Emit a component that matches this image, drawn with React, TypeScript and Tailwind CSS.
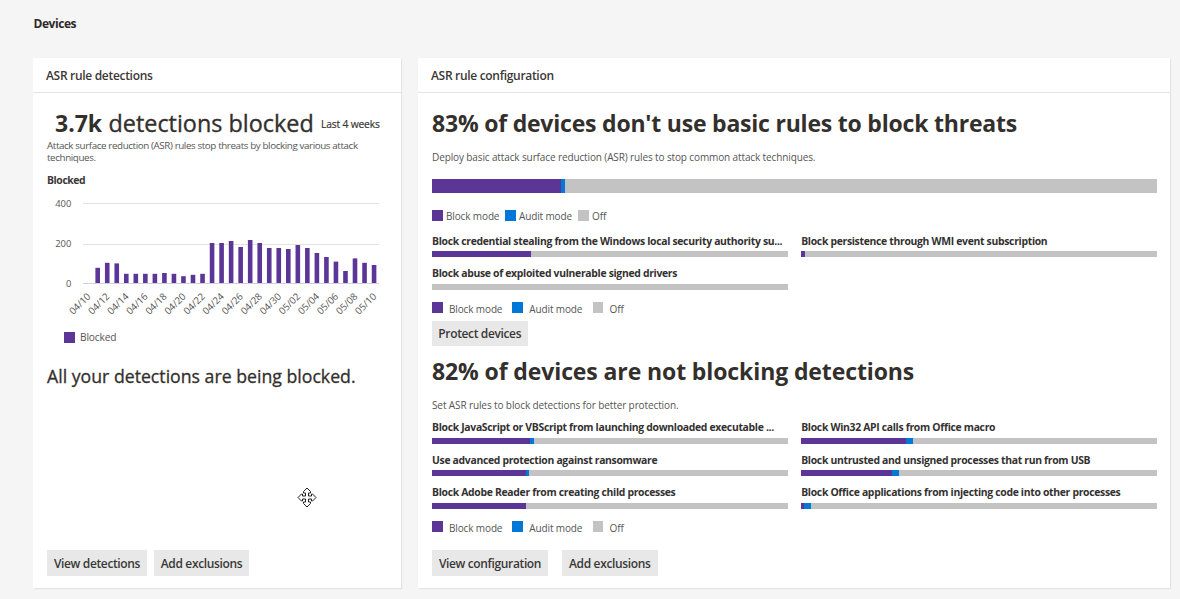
import type { ReactNode } from "react";

const BLOCKED = [
  76, 101, 98, 46, 46, 46, 46, 50, 46, 34, 41, 46, 200, 200, 210, 180, 215, 200, 175, 175, 170, 190, 175, 150, 130,
  107, 60, 123, 101, 90,
];

const TICKS = [
  "04/10", "04/12", "04/14", "04/16", "04/18", "04/20", "04/22", "04/24",
  "04/26", "04/28", "04/30", "05/02", "05/04", "05/06", "05/08", "05/10",
];

const STEP = 9.53;

function Chart() {
  return (
    <svg width="340" height="124" className="block" fontFamily="'Open Sans', sans-serif">
      <g stroke="#e3e3e3" strokeWidth="1">
        <path d="M36 9.5H332M36 50.5H332" />
        <path d="M36 89.5H332" stroke="#ccd1e4" />
      </g>
      <g fontSize="9.4" fill="#555" textAnchor="end">
        <text x="24.3" y="13.2">400</text>
        <text x="24.3" y="52.8">200</text>
        <text x="24.3" y="93">0</text>
      </g>
      {BLOCKED.map((v, i) => (
        <rect key={i} x={48.4 + i * STEP} y={89 - v / 5} width="4.6" height={v / 5} fill="#5c3696" />
      ))}
      <g fontSize="9.6" fill="#555" textAnchor="end">
        {TICKS.map((t, i) => (
          <text key={t} transform={`translate(${44.2 + i * STEP * 2} 103) rotate(-45)`}>
            {t}
          </text>
        ))}
      </g>
    </svg>
  );
}

function MoveCursor() {
  return (
    <svg className="absolute left-[297px] top-[487px]" width="20" height="21" viewBox="0 0 20 21">
      <path
        d="M10 1 13.5 4.5V6H11.5V9H14.5V7H15.5L19 10.5 15.5 14H14.5V12H11.5V15H13.5V16.5L10 20 6.5 16.5V15H8.5V12H5.5V14H4.5L1 10.5 4.5 7H5.5V9H8.5V6H6.5V4.5Z"
        fill="#fff"
        stroke="#222"
        strokeWidth="1"
      />
    </svg>
  );
}

function Button({ children, className }: { children: ReactNode; className: string }) {
  return (
    <button
      className={`flex items-center justify-center whitespace-nowrap bg-[#e8e8e8] pt-px text-[12px] font-semibold tracking-[-0.36px] text-[#3a3836] ${className}`}
    >
      {children}
    </button>
  );
}

function Swatch({ className }: { className: string }) {
  return <span className={`size-[10.5px] shrink-0 ${className}`} />;
}

function Legend({ wide = false }: { wide?: boolean }) {
  const item = wide ? "flex items-center gap-[6.5px] w-[80.3px]" : "flex items-center gap-[3.5px] w-[73px]";
  const label = wide ? "pt-[3px]" : "pt-px";
  return (
    <div className="flex h-3 items-center whitespace-nowrap text-[10px] leading-3 tracking-[-0.13px] text-[#555]">
      <span className={item}>
        <Swatch className="bg-[#5c3696]" />
        <span className={label}>Block mode</span>
      </span>
      <span className={item}>
        <Swatch className="bg-[#0078d7]" />
        <span className={label}>Audit mode</span>
      </span>
      <span className={item}>
        <Swatch className="bg-[#c3c3c3]" />
        <span className={label}>Off</span>
      </span>
    </div>
  );
}

function Bar({ block, audit, className }: { block: number; audit: number; className: string }) {
  return (
    <div className={`flex bg-[#c3c3c3] ${className}`}>
      <div className="bg-[#5c3696]" style={{ width: `${block}%` }} />
      <div className="bg-[#0078d7]" style={{ width: `${audit}%` }} />
    </div>
  );
}

function Rule({ name, block, audit }: { name: string; block: number; audit: number }) {
  return (
    <div className="h-[32.6px]">
      <div className="h-4 whitespace-nowrap text-[10.4px] font-bold leading-4 tracking-[-0.31px] text-[#333130]">
        {name}
      </div>
      <Bar block={block} audit={audit} className="mt-[2.5px] h-[6px]" />
    </div>
  );
}

function Card({ title, className, children }: { title: string; className: string; children: ReactNode }) {
  return (
    <section className={`flex h-[530px] flex-col bg-white shadow-[1px_1px_1px_#e4e4e4] ${className}`}>
      <h2 className="h-[35px] shrink-0 border-b border-[#e4e4e4] pl-[13px] text-[12px] font-semibold leading-[35px] tracking-[-0.31px] text-[#3a3836]">
        {title}
      </h2>
      {children}
    </section>
  );
}

export default function App() {
  return (
    <div className="relative h-[599px] w-[1180px] overflow-hidden bg-[#f5f5f5] pl-[33px] font-['Open_Sans',sans-serif]">
      <h1 className="h-[58px] pl-[0.5px] pt-[14px] text-[12px] font-bold leading-5 tracking-[-0.45px] text-[#2c2a29]">
        Devices
      </h1>
      <div className="flex gap-[17px]">
        <Card title="ASR rule detections" className="w-[368px]">
          <div className="flex flex-1 flex-col pl-[14px]">
            <div className="mt-[15px] flex h-[31px] items-center whitespace-nowrap pl-2 text-[#332f2c]">
              <span className="w-[53.5px] text-[23px] font-bold">3.7k</span>
              <span className="w-[212.5px] text-[23.4px] [-webkit-text-stroke:0.35px_#332f2c]">detections blocked</span>
              <span className="pt-[2px] text-[10.3px] tracking-[-0.18px] [-webkit-text-stroke:0.15px_#332f2c]">
                Last 4 weeks
              </span>
            </div>
            <p className="whitespace-nowrap pt-[0.5px] text-[9.8px] leading-[12.5px] tracking-[-0.39px] text-[#555]">
              Attack surface reduction (ASR) rules stop threats by blocking various attack
              <br />
              techniques.
            </p>
            <div className="mb-[6px] mt-[7.5px] text-[10.4px] font-bold leading-4 tracking-[-0.4px] text-[#3a3836]">
              Blocked
            </div>
            <Chart />
            <div className="mt-[13.5px] flex h-3 items-center gap-[5.5px] pl-[17px] text-[10.2px] tracking-[-0.16px] text-[#555]">
              <Swatch className="bg-[#5c3696]" />
              <span className="pt-px">Blocked</span>
            </div>
            <p className="mt-[20px] whitespace-nowrap text-[17.7px] leading-6 text-[#332f2c] [-webkit-text-stroke:0.3px_#332f2c]">
              All your detections are being blocked.
            </p>
            <div className="mb-[12px] mt-auto flex gap-[7px]">
              <Button className="h-[26px] w-[100px]">View detections</Button>
              <Button className="h-[26px] w-[95px]">Add exclusions</Button>
            </div>
          </div>
        </Card>
        <Card title="ASR rule configuration" className="w-[752px]">
          <div className="flex flex-1 flex-col pl-[14px] pr-[13px]">
            <h3 className="mt-[14px] h-8 whitespace-nowrap text-[23px] font-bold leading-8 tracking-[-0.21px] text-[#332f2c]">
              83% of devices don't use basic rules to block threats
            </h3>
            <p className="mt-[10px] h-4 whitespace-nowrap text-[10px] leading-4 tracking-[-0.12px] text-[#555]">
              Deploy basic attack surface reduction (ASR) rules to stop common attack techniques.
            </p>
            <Bar block={17.85} audit={0.55} className="mb-[17px] mt-[14px] h-[13.5px]" />
            <Legend />
            <div className="mt-[11px] grid h-[69px] grid-cols-[355.6px_355.8px] content-start gap-x-[13.6px]">
              <Rule name="Block credential stealing from the Windows local security authority su..." block={27.9} audit={0} />
              <Rule name="Block persistence through WMI event subscription" block={1.1} audit={0} />
              <Rule name="Block abuse of exploited vulnerable signed drivers" block={0} audit={0} />
            </div>
            <Legend wide />
            <Button className="mt-[7px] h-[25.5px] w-[95.5px]">Protect devices</Button>
            <h3 className="mt-[8.5px] h-8 whitespace-nowrap text-[23px] font-bold leading-8 tracking-[-0.11px] text-[#332f2c]">
              82% of devices are not blocking detections
            </h3>
            <p className="mt-[10px] h-4 whitespace-nowrap text-[10px] leading-4 tracking-[-0.11px] text-[#555]">
              Set ASR rules to block detections for better protection.
            </p>
            <div className="mt-[6.5px] grid h-[101.5px] grid-cols-[355.6px_355.8px] content-start gap-x-[13.6px]">
              <Rule name="Block JavaScript or VBScript from launching downloaded executable ..." block={27.7} audit={0.9} />
              <Rule name="Block Win32 API calls from Office macro" block={29.4} audit={2.1} />
              <Rule name="Use advanced protection against ransomware" block={26.5} audit={0.9} />
              <Rule name="Block untrusted and unsigned processes that run from USB" block={25.6} audit={1.9} />
              <Rule name="Block Adobe Reader from creating child processes" block={26.4} audit={0} />
              <Rule name="Block Office applications from injecting code into other processes" block={0.8} audit={1.9} />
            </div>
            <Legend wide />
            <div className="mb-[12px] mt-auto flex gap-[14px]">
              <Button className="h-[26px] w-[116px]">View configuration</Button>
              <Button className="h-[26px] w-[95.5px]">Add exclusions</Button>
            </div>
          </div>
        </Card>
      </div>
      <MoveCursor />
    </div>
  );
}
